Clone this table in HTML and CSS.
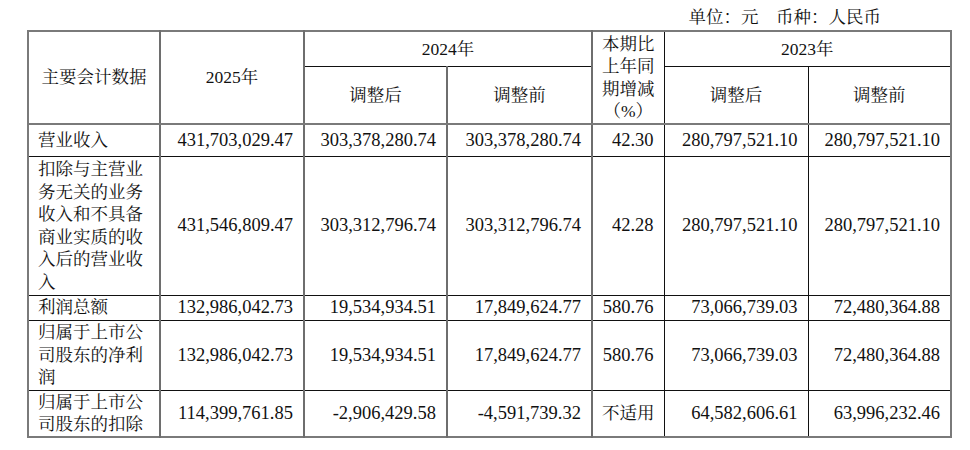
FILE: index.html
```html
<!DOCTYPE html>
<html lang="zh-CN">
<head>
<meta charset="utf-8">
<title>主要会计数据</title>
<link rel="stylesheet" href="styles.css">
</head>
<body>
<div class="page">
  <div class="unit">单位：元　币种：人民币</div>
  <table class="data">
    <colgroup>
      <col class="c1"><col class="c2"><col class="c3"><col class="c4"><col class="c5"><col class="c6"><col class="c7">
    </colgroup>
    <thead>
      <tr class="h1">
        <th rowspan="2" class="first gv">主要会计数据</th>
        <th rowspan="2" class="gv">2025年</th>
        <th colspan="2" class="gv">2024年</th>
        <th rowspan="2" class="pct">本期比<br>上年同<br>期增减<br>（%）</th>
        <th colspan="2">2023年</th>
      </tr>
      <tr class="h2">
        <th class="gv">调整后</th>
        <th class="gv">调整前</th>
        <th>调整后</th>
        <th>调整前</th>
      </tr>
    </thead>
    <tbody>
      <tr class="r1">
        <td class="label gv">营业收入</td>
        <td class="num gv">431,703,029.47</td>
        <td class="num gv">303,378,280.74</td>
        <td class="num gv">303,378,280.74</td>
        <td class="num">42.30</td>
        <td class="num">280,797,521.10</td>
        <td class="num">280,797,521.10</td>
      </tr>
      <tr class="r2">
        <td class="label gv">扣除与主营业务无关的业务收入和不具备商业实质的收入后的营业收入</td>
        <td class="num gv">431,546,809.47</td>
        <td class="num gv">303,312,796.74</td>
        <td class="num gv">303,312,796.74</td>
        <td class="num">42.28</td>
        <td class="num">280,797,521.10</td>
        <td class="num">280,797,521.10</td>
      </tr>
      <tr class="r3">
        <td class="label gv">利润总额</td>
        <td class="num gv">132,986,042.73</td>
        <td class="num gv">19,534,934.51</td>
        <td class="num gv">17,849,624.77</td>
        <td class="num">580.76</td>
        <td class="num">73,066,739.03</td>
        <td class="num">72,480,364.88</td>
      </tr>
      <tr class="r4">
        <td class="label gv">归属于上市公司股东的净利润</td>
        <td class="num gv">132,986,042.73</td>
        <td class="num gv">19,534,934.51</td>
        <td class="num gv">17,849,624.77</td>
        <td class="num">580.76</td>
        <td class="num">73,066,739.03</td>
        <td class="num">72,480,364.88</td>
      </tr>
      <tr class="r5">
        <td class="label gv">归属于上市公司股东的扣除</td>
        <td class="num gv">114,399,761.85</td>
        <td class="num gv">-2,906,429.58</td>
        <td class="num gv">-4,591,739.32</td>
        <td class="na">不适用</td>
        <td class="num">64,582,606.61</td>
        <td class="num">63,996,232.46</td>
      </tr>
    </tbody>
  </table>
</div>
</body>
</html>
```

FILE: styles.css
```css
html, body {
  margin: 0;
  padding: 0;
  background: #ffffff;
}

body {
  font-family: "Liberation Serif", "Noto Serif CJK SC", "Noto Sans CJK SC", serif;
  color: #111111;
  font-size: 17.5px;
}

.page {
  padding-left: 27px;
  width: 924px;
}

.unit {
  height: 30px;
  box-sizing: border-box;
  padding-top: 4px;
  line-height: 26px;
  text-align: right;
  padding-right: 70px;
  font-size: 17.5px;
}

.data {
  border-collapse: collapse;
  table-layout: fixed;
  width: 924px;
  border: 2px solid #7a7a7a;
}

.c1 { width: 132px; }
.c2 { width: 144px; }
.c3 { width: 143px; }
.c4 { width: 145px; }
.c5 { width: 72px; }
.c6 { width: 144px; }
.c7 { width: 143px; }

.data th,
.data td {
  border: 1px solid #111111;
  padding: 0;
  line-height: 22.5px;
  vertical-align: middle;
}

.data th {
  font-weight: normal;
  text-align: center;
}

.data .gv {
  border-right: 2px solid #6e6e6e;
}

.data thead tr.h2 th,
.data th.first,
.data th.gv[rowspan],
.data th.pct {
  border-bottom: 2px solid #7a7a7a;
}

.h1 { height: 35px; }
.h2 { height: 58px; }

.pct {
  line-height: 22.5px;
  vertical-align: top;
}

.r1 { height: 32px; }
.r2 { height: 139px; }
.r3 { height: 25px; }
.r4 { height: 70px; }
.r5 { height: 47px; }

.label {
  text-align: left;
  padding: 0 10px 0 9px !important;
  line-height: 23px;
}

.r4 .label,
.r5 .label {
  line-height: 22.5px;
}

.num {
  text-align: right;
  padding-right: 10px !important;
  font-size: 18.5px;
  white-space: nowrap;
}

.na {
  text-align: center;
  white-space: nowrap;
}
```
